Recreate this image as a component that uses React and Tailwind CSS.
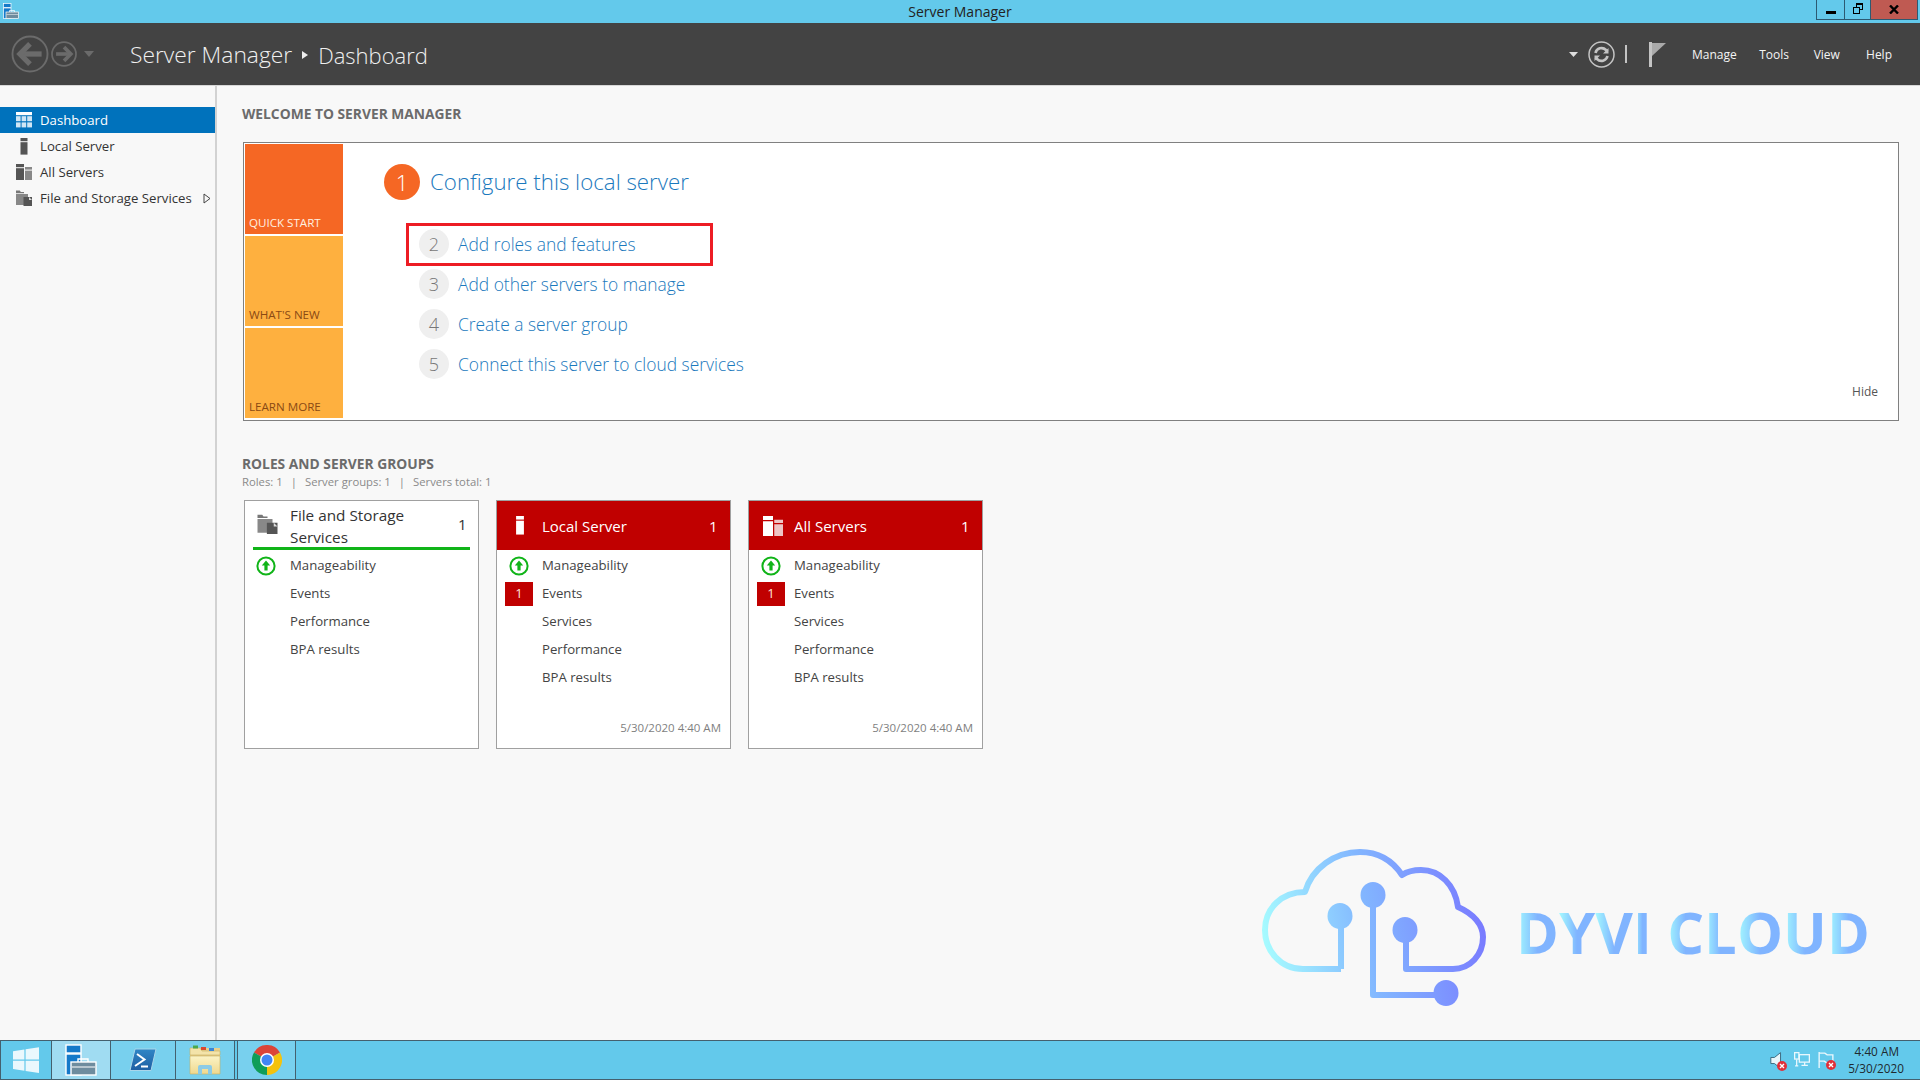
import React from "react";

/* ---------------------------- small icons ---------------------------- */
const DashIcon = () => (
  <svg width="16" height="16" viewBox="0 0 16 16" fill="#cfe6f5">
    <rect x="0" y="0" width="16" height="3.2" fill="#fff" />
    <rect x="0" y="4.2" width="4.6" height="5" />
    <rect x="5.6" y="4.2" width="4.6" height="5" />
    <rect x="11.2" y="4.2" width="4.8" height="5" />
    <rect x="0" y="10.4" width="4.6" height="5" />
    <rect x="5.6" y="10.4" width="4.6" height="5" />
    <rect x="11.2" y="10.4" width="4.8" height="5" />
  </svg>
);

const ServerIcon = ({ color = "#555", size = 16 }) => (
  <svg width={size} height={size + 1} viewBox="0 0 16 17" fill={color}>
    <rect x="4.5" y="0" width="7" height="3.2" />
    <rect x="4.5" y="4.2" width="7" height="12.4" />
  </svg>
);

const ServersIcon = ({ color = "#555", light = "#888", size = 16 }) => (
  <svg width={size} height={size} viewBox="0 0 16 16">
    <rect x="0" y="0" width="8" height="3.2" fill={color} />
    <rect x="0" y="4.2" width="8" height="11.8" fill={color} />
    <rect x="9" y="3" width="7" height="2.6" fill={light} />
    <rect x="9" y="6.6" width="7" height="9.4" fill={light} />
  </svg>
);

const StorageIcon = ({ w = 16, h = 16 }) => (
  <svg width={w} height={h} viewBox="0 0 16 16">
    <path d="M0 0.5h3.8l1 1.5H8v1.2H0z" fill="#777" />
    <path d="M0 4h12v11H0z" fill="#888" />
    <path d="M7.5 7H16v9H7.5z" fill="#555" />
    <path d="M13 7l3 3h-3z" fill="#ddd" />
  </svg>
);

const StatusUp = () => (
  <svg width="20" height="20" viewBox="0 0 20 20">
    <circle cx="10" cy="10" r="8.6" fill="#fff" stroke="#10b418" strokeWidth="2" />
    <path d="M10 4.6l4.2 5h-2.6v5h-3.2v-5H5.8z" fill="#10b418" />
  </svg>
);

const Caret = () => (
  <svg width="9" height="5" viewBox="0 0 9 5" fill="#ddd">
    <path d="M0 0h9L4.5 5z" />
  </svg>
);

const RoundArrow = ({ size, flip }) => (
  <svg width={size} height={size} viewBox="0 0 36 36" fill="none" stroke="#6b6b6b">
    <circle cx="18" cy="18" r="16.6" strokeWidth={size > 30 ? 1.8 : 2.4} />
    <g transform={flip ? "translate(36 0) scale(-1 1)" : undefined} strokeWidth="5">
      <path d="M29 18H9" />
      <path d="M18 8.5L8.5 18l9.5 9.5" />
    </g>
  </svg>
);

/* ---------------------------- taskbar art ---------------------------- */
const WinLogo = () => (
  <svg width="28" height="28" viewBox="0 0 28 28" fill="#eaf8fd">
    <path d="M1 5.2l11.4-1.7v10H1z" />
    <path d="M13.6 3.3L27 1.3v12.2H13.6z" />
    <path d="M1 14.7h11.4v10L1 23z" />
    <path d="M13.6 14.7H27V27l-13.4-2z" />
  </svg>
);

const ManagerIcon = ({ small }) => (
  <svg width={small ? 18 : 32} height={small ? 16 : 32} viewBox="0 0 32 32">
    <rect x="1" y="1" width="15" height="8" fill="#1479c9" stroke="#fff" strokeWidth="1.4" />
    <rect x="1" y="10" width="15" height="21" fill="#1479c9" stroke="#fff" strokeWidth="1.4" />
    <rect x="6" y="18" width="25" height="13" fill="#6e8c9e" stroke="#fff" strokeWidth="1.4" />
    <path d="M13 18v-3h10v3" fill="none" stroke="#fff" strokeWidth="1.4" />
    <path d="M7 23h23" stroke="#fff" strokeWidth="1" />
  </svg>
);

const PowerShell = () => (
  <svg width="28" height="24" viewBox="0 0 28 24">
    <defs>
      <linearGradient id="psh" x1="0" y1="0" x2="0" y2="1">
        <stop offset="0" stopColor="#2f86c6" />
        <stop offset="1" stopColor="#1f5fa3" />
      </linearGradient>
    </defs>
    <path d="M6 1h21L22 22.500H1z" fill="url(#psh)" stroke="#a9d6ea" strokeWidth="1" />
    <path d="M8 6l7.500 5.500L6 18" fill="none" stroke="#fff" strokeWidth="2" />
    <path d="M12 18.500h7" stroke="#fff" strokeWidth="2" />
  </svg>
);

const FolderIcon = () => (
  <svg width="32" height="30" viewBox="0 0 32 30">
    <defs>
      <linearGradient id="fld" x1="0" y1="0" x2="0" y2="1">
        <stop offset="0" stopColor="#fbf3c6" />
        <stop offset="1" stopColor="#efd88e" />
      </linearGradient>
    </defs>
    <path d="M1 3h30v26H1z" fill="#e8cf8b" />
    <path d="M1 3h10l2 3h18v4H1z" fill="#f3e3a9" stroke="#c8ae63" strokeWidth="0.6" />
    <rect x="4" y="0.500" width="5" height="3" fill="#4aa84a" />
    <rect x="12" y="2" width="5" height="3" fill="#d9482f" />
    <rect x="20" y="3" width="5" height="3" fill="#3b86d6" />
    <path d="M1 11h30v18H1z" fill="url(#fld)" stroke="#c8ae63" strokeWidth="0.6" />
    <path d="M9 29v-7a2 2 0 012-2h10a2 2 0 012 2v7h-4v-5h-6v5z" fill="#8ccbe6" />
  </svg>
);

const Chrome = () => (
  <svg width="30" height="30" viewBox="0 0 30 30">
    <path d="M15 15L2 7.500A15 15 0 0128 7.500z" fill="#db4437" />
    <path d="M15 15L15 30A15 15 0 012 7.500z" fill="#0f9d58" />
    <path d="M15 15L28 7.500A15 15 0 0115 30z" fill="#f4c20d" />
    <circle cx="15" cy="15" r="7" fill="#fff" />
    <circle cx="15" cy="15" r="5.500" fill="#4285f4" />
  </svg>
);

const TrayBadge = () => (
  <svg className="absolute -right-[2px] -bottom-[2px]" width="10" height="10" viewBox="0 0 9 9">
    <circle cx="4.500" cy="4.500" r="4.500" fill="#e0303a" />
    <path d="M2.700 2.700l3.600 3.600M6.300 2.700L2.700 6.300" stroke="#fff" strokeWidth="1.200" />
  </svg>
);

const DyviLogo = () => (
  <svg width="240" height="180" viewBox="0 0 240 180" fill="none">
    <defs>
      <linearGradient id="dyvi" gradientUnits="userSpaceOnUse" x1="5" y1="110" x2="235" y2="70">
        <stop offset="0" stopColor="#a6fbff" />
        <stop offset="0.45" stopColor="#82b6ff" />
        <stop offset="1" stopColor="#7874ff" />
      </linearGradient>
    </defs>
    <g stroke="url(#dyvi)" strokeWidth="6" strokeLinejoin="round">
      <path d="M81 131H43C20 131 5 112 5 92C5 70 22 54 45 54C52 30 75 14 100 14C118 14 132 22 142 37C148 33 155 32 161 32C180 32 195 47 198 69C214 76 223 87 223 99C223 117 210 131 193 131H146V92" />
      <path d="M113 57V157H186" />
      <path d="M81 131V78" />
    </g>
    <g fill="url(#dyvi)">
      <ellipse cx="80" cy="78" rx="12.500" ry="13" />
      <ellipse cx="113" cy="57" rx="12.500" ry="13" />
      <ellipse cx="145" cy="92" rx="12.500" ry="13" />
      <ellipse cx="186" cy="155" rx="12.500" ry="13" />
    </g>
  </svg>
);

/* ---------------------------- data ---------------------------- */
const steps = [
  ["2", "Add roles and features"],
  ["3", "Add other servers to manage"],
  ["4", "Create a server group"],
  ["5", "Connect this server to cloud services"],
];

const navItems = [
  { label: "Dashboard", icon: <DashIcon />, active: true },
  { label: "Local Server", icon: <ServerIcon /> },
  { label: "All Servers", icon: <ServersIcon /> },
  { label: "File and Storage Services", icon: <StorageIcon />, arrow: true },
];

const Card = ({ title, icon, rows, events, date, ok }) => (
  <div className="w-[235px] h-[249px] border border-[#a0a0a0] bg-white flex flex-col">
    {ok ? (
      <div className="mx-2 h-[49px] border-b-[3px] border-[#10b418] flex items-center text-[#333]">
        <div className="w-[37px] pl-[4px]">{icon}</div>
        <div className="flex-1 text-[15.300px] leading-[22px] pt-[3px]">{title}</div>
        <div className="w-[6px] mr-[6px] text-[15px]">1</div>
      </div>
    ) : (
      <div className="h-[49px] bg-[#c00000] flex items-center text-white">
        <div className="w-[45px] pl-[14px]">{icon}</div>
        <div className="flex-1 pt-[1px] text-[15px]">{title}</div>
        <div className="w-[10px] mr-[11px] pt-[1px] text-[15px]">1</div>
      </div>
    )}
    <div className="flex flex-col pt-[2px]">
      {rows.map((r, i) => (
        <div key={r} className="h-[28px] flex items-center text-[13.200px] text-[#444]">
          <div className={`w-[45px] flex justify-center ${ok ? "pr-[3px]" : "pr-[1px]"}`}>
            {i === 0 && <StatusUp />}
            {i === 1 && events && (
              <div className="w-[28px] h-[24px] bg-[#c00000] text-[#ffe6d8] flex items-center justify-center text-[13px]">
                1
              </div>
            )}
          </div>
          <span>{r}</span>
        </div>
      ))}
    </div>
    {date && <div className="mt-auto mb-[12px] mr-[9px] text-right text-[11.500px] text-[#7f7f7f]">{date}</div>}
  </div>
);

export default function App() {
  return (
    <div className="h-screen w-full flex flex-col overflow-hidden bg-[#f8f8f8] font-['Open_Sans',sans-serif]">
      {/* title bar */}
      <div className="relative h-[23px] shrink-0 bg-[#63c9eb] flex items-center justify-center text-[14px] text-[#222]">
        <div className="absolute left-[2px] top-[3px]">
          <ManagerIcon small />
        </div>
        Server Manager
        <div className="absolute right-[2px] top-0 h-[20px] flex border border-t-0 border-[#2c5a72]">
          <div className="w-[28px] flex items-center justify-center border-r border-[#2c5a72] pt-[5px]">
            <div className="w-[10px] h-[3px] bg-black" />
          </div>
          <div className="w-[26px] flex items-center justify-center border-r border-[#2c5a72]">
            <div className="relative w-[9px] h-[9px]">
              <div className="absolute right-[-1px] top-[-2px] w-[7px] h-[7px] border border-black border-t-2" />
              <div className="absolute left-0 bottom-0 w-[7px] h-[7px] bg-[#63c9eb] border-[1.500px] border-black" />
            </div>
          </div>
          <div className="w-[46px] bg-[#bf5a52] flex items-center justify-center">
            <svg width="10" height="9" viewBox="0 0 10 9" stroke="#000" strokeWidth="2.400">
              <path d="M1 0.500l8 8M9 0.500l-8 8" />
            </svg>
          </div>
        </div>
      </div>

      {/* command bar */}
      <div className="h-[63px] shrink-0 bg-[#434343] border-b border-[#d8d8d8] flex items-center text-white">
        <div className="ml-[11px] w-[119px] flex items-center gap-[2px]">
          <RoundArrow size={38} />
          <RoundArrow size={26} flip />
          <svg className="ml-[5px]" width="10" height="6" viewBox="0 0 10 6" fill="#6b6b6b">
            <path d="M0 0h10L5 6z" />
          </svg>
        </div>
        <div className="flex items-center pt-[2px] font-light text-[#f0f0f0]">
          <span className="text-[22.800px]">Server Manager</span>
          <svg className="mx-[10px]" width="6" height="8" viewBox="0 0 6 8" fill="#eee">
            <path d="M0 0l6 4-6 4z" />
          </svg>
          <span className="text-[22px]">Dashboard</span>
        </div>
        <div className="ml-auto mr-[28px] flex items-center">
          <Caret />
          <svg className="ml-[10px]" width="27" height="27" viewBox="0 0 27 27" fill="none" stroke="#c4c4c4">
            <circle cx="13.500" cy="13.500" r="12.500" strokeWidth="1.500" />
            <path d="M7.500 12a6.200 6.200 0 0110.500-3l1.500 1.500M19.500 15a6.200 6.200 0 01-10.500 3l-1.500-1.500" strokeWidth="2.600" />
            <path d="M20.500 7v5.500h-5.500zM6.500 20v-5.500h5.500z" fill="#c4c4c4" stroke="none" />
          </svg>
          <div className="ml-[10px] w-[2px] h-[18px] bg-[#c4c4c4]" />
          <svg className="ml-[22px]" width="18" height="25" viewBox="0 0 18 25">
            <rect x="0" y="0" width="3" height="25" fill="#c4c4c4" />
            <path d="M3 1h14L3 14z" fill="#aaa" />
          </svg>
          <div className="ml-[25px] w-[200px] pt-[2px] flex text-[12px] text-[#f4f4f4]">
            <span className="w-[68px]">Manage</span>
            <span className="w-[55px]">Tools</span>
            <span className="w-[53px]">View</span>
            <span>Help</span>
          </div>
        </div>
      </div>

      <div className="relative flex-1 flex min-h-0">
        {/* sidebar */}
        <div className="w-[217px] shrink-0 border-r-2 border-[#d2d2d2] pt-[21px] text-[13.200px] text-[#333]">
          {navItems.map((n) => (
            <div
              key={n.label}
              className={`h-[26px] flex items-center ${n.active ? "bg-[#0072bc] text-white" : ""}`}
            >
              <div className="w-[40px] pl-[16px]">{n.icon}</div>
              <span className="pt-[1px]">{n.label}</span>
              {n.arrow && (
                <svg className="ml-auto mr-[4px]" width="8" height="11" viewBox="0 0 8 11" fill="none" stroke="#444">
                  <path d="M1 1l6 4.500-6 4.500z" />
                </svg>
              )}
            </div>
          ))}
        </div>

        {/* content */}
        <div className="flex-1 pl-[25px] pr-[21px] pt-[19px] text-[#444]">
          <div className="h-[17px] text-[13.800px] leading-[17px] font-bold text-[#6b6b6b]">WELCOME TO SERVER MANAGER</div>
          <div className="mt-[20px] ml-[1px] h-[279px] border border-[#808080] bg-white p-[1px] flex">
            <div className="w-[98px] shrink-0 flex flex-col gap-[2px] text-[11.600px]">
              <div className="h-[90px] bg-[#f56724] text-[#fff0e0] flex items-end pl-[4px] pb-[3px]">QUICK START</div>
              <div className="h-[90px] bg-[#feb03f] text-[#8a4a14] flex items-end pl-[4px] pb-[3px]">WHAT'S NEW</div>
              <div className="h-[90px] bg-[#feb03f] text-[#8a4a14] flex items-end pl-[4px] pb-[3px]">LEARN MORE</div>
            </div>
            <div className="flex-1 pl-[41px] pt-[20px]">
              <div className="flex items-center h-[36px]">
                <div className="w-[36px] h-[36px] rounded-full bg-[#f56724] text-white flex items-center justify-center text-[22px] font-light">
                  1
                </div>
                <span className="ml-[10px] text-[22.300px] font-light text-[#1b79bd]">Configure this local server</span>
              </div>
              <div className="mt-[24px] ml-[22px] flex flex-col">
                {steps.map(([num, text], i) => (
                  <div
                    key={num}
                    className={`flex items-center whitespace-nowrap ${
                      i === 0
                        ? "w-[307px] border-[3px] border-[#ed1c24] h-[43px] -my-[1.500px] pl-[10px]"
                        : "h-[40px] pl-[13px]"
                    }`}
                  >
                    <div className="w-[30px] h-[30px] shrink-0 rounded-full bg-[#efefef] text-[#777] flex items-center justify-center text-[18px] font-light">
                      {num}
                    </div>
                    <span className="ml-[9px] text-[17.400px] font-light text-[#1b79bd]">{text}</span>
                  </div>
                ))}
              </div>
            </div>
            <div className="self-end mb-[18px] mr-[19px] text-[12px] text-[#555]">Hide</div>
          </div>

          <div className="mt-[34px] text-[13.800px] leading-[17px] font-bold text-[#6b6b6b]">ROLES AND SERVER GROUPS</div>
          <div className="mt-[1px] h-[18px] flex items-center text-[11.300px] text-[#8a8a8a]">
            <span>Roles: 1</span>
            <span className="mx-[8px]">|</span>
            <span>Server groups: 1</span>
            <span className="mx-[8px]">|</span>
            <span>Servers total: 1</span>
          </div>
          <div className="mt-[9px] ml-[2px] flex gap-[17px]">
            <Card
              ok
              title="File and Storage Services"
              icon={<StorageIcon w={21} h={20} />}
              rows={["Manageability", "Events", "Performance", "BPA results"]}
            />
            <Card
              title="Local Server"
              icon={<ServerIcon color="#fff" size={18} />}
              rows={["Manageability", "Events", "Services", "Performance", "BPA results"]}
              events
              date="5/30/2020 4:40 AM"
            />
            <Card
              title="All Servers"
              icon={<ServersIcon color="#fff" light="#eec4c4" size={20} />}
              rows={["Manageability", "Events", "Services", "Performance", "BPA results"]}
              events
              date="5/30/2020 4:40 AM"
            />
          </div>
        </div>

        {/* watermark */}
        <div className="absolute left-[1260px] top-[752px] flex items-start">
          <DyviLogo />
          <div className="ml-[16px] mt-[54px] flex text-[58px] leading-[80px] font-bold whitespace-pre">
            {["D", "Y", "V", "I", " ", "C", "L", "O", "U", "D"].map((c, i) => (
              <span key={i} className="bg-gradient-to-r from-[#a6fbff] to-[#80b4ff] to-50% bg-clip-text text-transparent">
                {c}
              </span>
            ))}
          </div>
        </div>
      </div>

      {/* taskbar */}
      <div className="h-[40px] shrink-0 bg-[#63c9eb] border-t border-l border-b border-[#44606e] flex items-stretch">
        <div className="w-[51px] flex items-center justify-center border-r border-[#44606e]">
          <WinLogo />
        </div>
        <div className="w-[59px] bg-[#a0dcf2] flex items-center justify-center border-r border-[#44606e]">
          <ManagerIcon />
        </div>
        <div className="w-[65px] bg-[#78d0ee] flex items-center justify-center border-r border-[#44606e]">
          <PowerShell />
        </div>
        <div className="w-[59px] bg-[#78d0ee] flex items-center justify-center border-r border-[#44606e]">
          <FolderIcon />
        </div>
        <div className="ml-[2px] w-[59px] bg-[#78d0ee] flex items-center justify-center border-x border-[#44606e]">
          <Chrome />
        </div>
        <div className="ml-auto mr-[16px] flex items-center text-[#1f2a30]">
          <div className="relative w-[15px] h-[17px] mr-[9px]">
            <svg width="15" height="17" viewBox="0 0 12 14" fill="#e8f6fb" stroke="#3c6a80" strokeWidth="0.800">
              <path d="M0.500 4.500h3l5-4v13l-5-4h-3z" />
            </svg>
            <TrayBadge />
          </div>
          <div className="mr-[8px]">
            <svg width="16" height="16" viewBox="0 0 15 15" fill="none" stroke="#eaf8fd" strokeWidth="1.200">
              <rect x="0.600" y="0.600" width="4" height="6" />
              <rect x="5" y="2.500" width="9.400" height="7" />
              <path d="M2.500 7v5.500M7 12.500h6M10 9.500v3M1 13h3" />
            </svg>
          </div>
          <div className="relative w-[16px] h-[16px] mr-[18px]">
            <svg width="16" height="16" viewBox="0 0 14 14" fill="none" stroke="#eaf8fd" strokeWidth="1.200">
              <path d="M1 0v14M1 1h5l2 1.500h5v7H7.500L5.500 8H1" />
            </svg>
            <TrayBadge />
          </div>
          <div className="w-[52px] flex flex-col items-end text-[11.800px] leading-[17px]">
            <span className="pr-[5px]">4:40 AM</span>
            <span>5/30/2020</span>
          </div>
        </div>
      </div>
    </div>
  );
}
